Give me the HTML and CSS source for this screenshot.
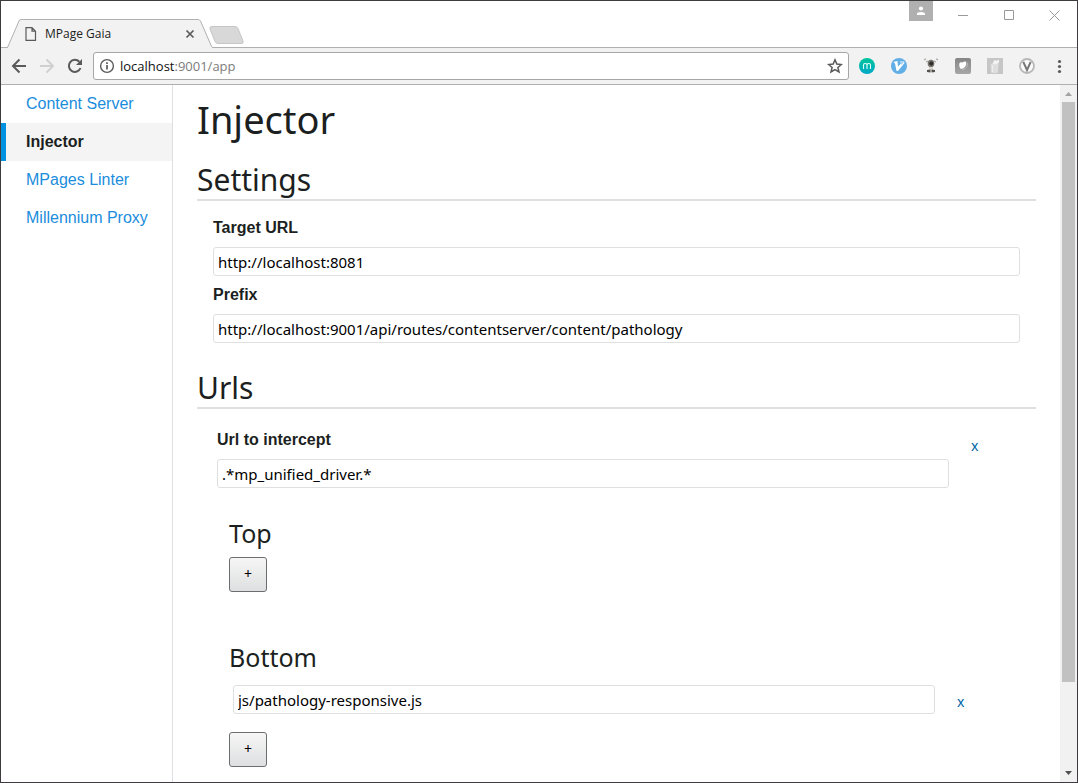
FILE: index.html
```html
<!DOCTYPE html>
<html lang="en">
<head>
<meta charset="utf-8">
<title>MPage Gaia</title>
<link rel="stylesheet" href="styles.css">
</head>
<body>
<div class="window">
  <header class="tabstrip">
    <div class="tab">
      <svg class="tab-shape" width="208" height="29" viewBox="0 0 208 29"><path d="M0 29V28.500H1.500L13 2Q13.500 .500 15 .500H192Q193.500 .500 194.500 2L206 28.500H208V29Z" fill="#f2f2f2" stroke="#b0b0b0"/><path d="M2 28.500H206" stroke="#f2f2f2"/></svg>
      <svg class="tab-page" width="12" height="14" viewBox="0 0 12 14" fill="none" stroke="#5a5a5a" stroke-width="1.200"><path d="M1 .700H7L10.500 4.200V13.300H1ZM7 .700V4.200H10.500"/></svg>
      <span class="tab-title">MPage Gaia</span>
      <button class="icon-button tab-close" aria-label="Close tab"><svg width="10" height="10" viewBox="0 0 10 10"><path d="M1.500 1.500L8.500 8.500M8.500 1.500L1.500 8.500" stroke="#5a5a5a" stroke-width="1.700"/></svg></button>
    </div>
    <button class="icon-button new-tab" aria-label="New tab"><svg width="36" height="18" viewBox="0 0 36 18"><path d="M3 .500H26Q28 .500 29 2.500L34 15Q35 17.500 32 17.500H9Q7 17.500 6 15.500L1 3Q0 .500 3 .500Z" fill="#d8d8d8" stroke="#c6c6c6"/></svg></button>
    <div class="window-controls">
      <button class="icon-button profile" aria-label="Profile"><svg width="10" height="10" viewBox="0 0 10 10" fill="#fff"><circle cx="5" cy="2.500" r="2.100"/><path d="M1 9V7.800Q1 6 5 6Q9 6 9 7.800V9Z"/></svg></button>
      <button class="icon-button control" aria-label="Minimize"><svg width="11" height="11" viewBox="0 0 11 11"><path d="M0 5.500H10" stroke="#999"/></svg></button>
      <button class="icon-button control" aria-label="Maximize"><svg width="11" height="11" viewBox="0 0 11 11"><path d="M.500 .500H9.500V9.500H.500Z" fill="none" stroke="#999"/></svg></button>
      <button class="icon-button control" aria-label="Close"><svg width="11" height="11" viewBox="0 0 11 11"><path d="M.500 .500L10.500 10.500M10.500 .500L.500 10.500" stroke="#999"/></svg></button>
    </div>
  </header>

  <nav class="toolbar" aria-label="Browser">
    <div class="history">
      <button class="icon-button" aria-label="Back"><svg width="16" height="16" viewBox="0 0 16 16" fill="none" stroke="#5a5a5a" stroke-width="2"><path d="M15 8H2.500M8.500 1.500L2 8L8.500 14.500"/></svg></button>
      <button class="icon-button" aria-label="Forward"><svg width="16" height="16" viewBox="0 0 16 16" fill="none" stroke="#d0d0d0" stroke-width="2"><path d="M1 8H13.500M7.500 1.500L14 8L7.500 14.500"/></svg></button>
      <button class="icon-button" aria-label="Reload"><svg width="16" height="16" viewBox="0 0 16 16"><path d="M13.500 10A6 6 0 1 1 12.300 3.800" fill="none" stroke="#5a5a5a" stroke-width="2"/><path d="M15 1V7H9Z" fill="#5a5a5a"/></svg></button>
    </div>
    <div class="address">
      <svg width="16" height="16" viewBox="0 0 16 16"><circle cx="8" cy="8" r="6.400" fill="none" stroke="#5a5a5a" stroke-width="1.400"/><path d="M8 7V11.500M8 4.300V6" stroke="#5a5a5a" stroke-width="1.700"/></svg>
      <div class="url" role="textbox" aria-label="Address" contenteditable="true" spellcheck="false">localhost<span class="url-rest">:9001/app</span></div>
      <button class="icon-button" aria-label="Bookmark"><svg width="16" height="16" viewBox="0 0 16 16"><path d="M8 1.800L9.800 6.100L14.400 6.500L10.900 9.500L12 14L8 11.600L4 14L5.100 9.500L1.600 6.500L6.200 6.100Z" fill="none" stroke="#5a5a5a" stroke-width="1.500"/></svg></button>
    </div>
    <div class="extensions">
      <button class="icon-button" aria-label="Extension m"><svg width="16" height="16" viewBox="0 0 16 16"><defs><linearGradient id="teal" x2="0" y2="1"><stop stop-color="#00c49a"/><stop offset="1" stop-color="#00a9c7"/></linearGradient></defs><circle cx="8" cy="8" r="8" fill="url(#teal)"/><path d="M4.500 11V7Q4.500 5.500 6.200 5.500Q8 5.500 8 7V11M8 7Q8 5.500 9.800 5.500Q11.500 5.500 11.500 7V11" fill="none" stroke="#e6fffa" stroke-width="1.100"/></svg></button>
      <button class="icon-button" aria-label="Extension V"><svg width="16" height="16" viewBox="0 0 16 16"><circle cx="8" cy="8" r="8" fill="#62aee6"/><path d="M2.500 4L6.500 3L7 8.500L10 5.500L9 3.500L13 3.500L13.500 5L7 13H5.500L4 5.500Z" fill="#fff"/><path d="M9.500 3.500L13 4L10.500 7Z" fill="#a9d3f3"/></svg></button>
      <button class="icon-button" aria-label="Postman"><svg width="16" height="16" viewBox="0 0 16 16"><path d="M1 2L3 .800M13 .800L15 2M3 4L5 3M11 3L13 4" stroke="#aaa7a0" stroke-width="1.200"/><ellipse cx="8" cy="5.500" rx="3.300" ry="3.800" fill="#77736b"/><circle cx="8.300" cy="5.600" r="2" fill="#2f2d2a"/><path d="M6 9H10V12H6Z" fill="#d9d6ce"/><path d="M4 12L7.500 11.500V14.500L4 14ZM8.700 11.500L12 12V14L8.700 14.500Z" fill="#55524d"/><path d="M7.300 12H9V14H7.300Z" fill="#999"/></svg></button>
      <button class="icon-button" aria-label="Extension leaf"><svg width="16" height="16" viewBox="0 0 16 16"><defs><linearGradient id="grey" x2="0" y2="1"><stop stop-color="#858585"/><stop offset="1" stop-color="#a6a6a6"/></linearGradient></defs><rect width="16" height="16" rx="2" fill="url(#grey)"/><path d="M4.300 5.500Q5.500 3.500 7.500 4.500Q9.500 3 11.200 3.800Q12 7 9.500 9.500Q7.500 11.500 5.200 10.500Q3.800 8 4.300 5.500Z" fill="#fff"/><path d="M12 4.500Q13.500 6.500 11.500 9.500Q9.500 12 7 12" fill="none" stroke="#b8b8b8"/></svg></button>
      <button class="icon-button" aria-label="Extension bin"><svg width="16" height="16" viewBox="0 0 16 16"><path d="M0 0H16V16H0Z" fill="#c6c6c6"/><path d="M3.500 6Q8 4.500 11.500 6L11 14.500Q7 16 4 14.500Z" fill="#dedede"/><path d="M5.500 5.500L7.500 2L10 2.800L12 1.500V5L8 6.500Z" fill="#f3f3f3"/><path d="M5.500 7V14" stroke="#eee"/></svg></button>
      <button class="icon-button" aria-label="Extension V grey"><svg width="16" height="16" viewBox="0 0 16 16"><circle cx="8" cy="8" r="7" fill="#fafafa" stroke="#b8b8b8" stroke-width="1.800"/><path d="M4.300 3.800L8 12L11.700 3.800" fill="none" stroke="#777" stroke-width="2"/></svg></button>
      <button class="icon-button" aria-label="Menu"><svg width="16" height="16" viewBox="0 0 16 16" fill="#5a5a5a"><circle cx="8.500" cy="3.500" r="1.600"/><circle cx="8.500" cy="8.500" r="1.600"/><circle cx="8.500" cy="13.500" r="1.600"/></svg></button>
    </div>
  </nav>

  <div class="page">
    <nav class="sidebar" aria-label="Sections">
      <a class="nav-link" href="#content">Content Server</a>
      <a class="nav-link active" href="#injector" aria-current="page">Injector</a>
      <a class="nav-link" href="#linter">MPages Linter</a>
      <a class="nav-link" href="#proxy">Millennium Proxy</a>
    </nav>
    <main class="content">
      <h1>Injector</h1>
      <section class="settings">
        <h2>Settings</h2>
        <div class="fields">
          <label for="target">Target URL</label>
          <input class="text" id="target" type="text" value="http://localhost:8081">
          <label for="prefix">Prefix</label>
          <input class="text" id="prefix" type="text" value="http://localhost:9001/api/routes/contentserver/content/pathology">
        </div>
      </section>
      <section>
        <h2>Urls</h2>
        <div class="rule">
          <div class="rule-field">
            <label for="intercept">Url to intercept</label>
            <input class="text" id="intercept" type="text" value=".*mp_unified_driver.*">
          </div>
          <button class="remove" aria-label="Remove url">x</button>
        </div>
        <div class="group">
          <h3>Top</h3>
          <button class="add" aria-label="Add top script">+</button>
        </div>
        <div class="group">
          <h3>Bottom</h3>
          <div class="script">
            <input class="text" type="text" aria-label="Bottom script" value="js/pathology-responsive.js">
            <button class="remove" aria-label="Remove script">x</button>
          </div>
          <button class="add" aria-label="Add bottom script">+</button>
        </div>
      </section>
    </main>
    <div class="scrollbar" aria-hidden="true">
      <svg width="17" height="17" viewBox="0 0 17 17"><path d="M5 11L8.500 7L12 11Z" fill="#a3a3a3"/></svg>
      <div class="track"><div class="thumb"></div></div>
      <svg width="17" height="17" viewBox="0 0 17 17"><path d="M5 6L8.500 10L12 6Z" fill="#505050"/></svg>
    </div>
  </div>
</div>
</body>
</html>
```

FILE: styles.css
```css
* { box-sizing: border-box; }

body {
  margin: 0;
  font-family: "Noto Sans", sans-serif;
  color: #1c1f21;
}

.window {
  display: flex;
  flex-direction: column;
  height: 100vh;
  border: 1px solid #3f3c40;
  background: #fff;
  overflow: hidden;
}

.icon-button {
  display: flex;
  align-items: center;
  justify-content: center;
  padding: 0;
  border: 0;
  background: none;
}

.icon-button svg,
.tab svg,
.address svg,
.scrollbar svg { display: block; flex: none; }

.tabstrip {
  display: flex;
  align-items: flex-end;
  height: 47px;
  flex: none;
  border-bottom: 1px solid #b0b0b0;
}

.tab {
  position: relative;
  display: flex;
  align-items: center;
  width: 208px;
  height: 29px;
  margin: 0 0 -1px 5px;
  padding: 0 19px;
}

.tab-shape { position: absolute; inset: 0; }
.tab-page { position: relative; }

.tab-title {
  position: relative;
  flex: 1;
  padding-left: 8px;
  font-family: "Open Sans", sans-serif;
  font-size: 12px;
  color: #222;
}

.tab-close { position: relative; }
.new-tab { margin: 0 0 3px -5px; }

.window-controls {
  display: flex;
  align-self: flex-start;
  margin-left: auto;
}

.profile { width: 24px; height: 20px; margin-right: 7px; background: #b0b0b0; }
.control { width: 46px; height: 28px; }
.control:last-child { width: 45px; }

.toolbar {
  display: flex;
  align-items: center;
  height: 37px;
  flex: none;
  padding: 0 10px;
  border-bottom: 1px solid #b0b0b0;
  background: #f2f2f2;
}

.history { display: flex; gap: 12px; margin-right: 10px; }

.address {
  display: flex;
  flex: 1;
  align-items: center;
  height: 28px;
  padding: 0 5px;
  border: 1px solid #a6a6a6;
  border-radius: 3px;
  background: #fff;
}

.url {
  flex: 1;
  padding-left: 5px;
  font-family: "Open Sans", sans-serif;
  font-size: 13px;
  color: #111;
}

.url-rest { color: #7c7c7c; }

.extensions { display: flex; gap: 16px; margin-left: 10px; }

.page { display: flex; flex: 1; min-height: 0; }

.sidebar {
  width: 172px;
  flex: none;
  border-right: 1px solid #dedfe0;
}

.nav-link {
  display: block;
  padding-left: 20px;
  border-left: 5px solid transparent;
  font: 16px/38px "Liberation Sans", Arial, sans-serif;
  color: #1b8ddc;
  text-decoration: none;
}

.nav-link.active {
  border-color: #0092e0;
  background: #f4f4f4;
  color: #1c1f21;
  font-weight: bold;
}

.content {
  flex: 1;
  min-width: 0;
  padding: 10px 24px 0;
  overflow: hidden;
}

h1, h2, h3 { margin: 0; font-weight: normal; }
h1 { font-size: 38px; line-height: 48px; }
h2 { margin-top: 18px; border-bottom: 2px solid #dedfe0; font-size: 30px; line-height: 38px; }
h3 { margin-bottom: 4px; font-size: 25px; line-height: 40px; }

.fields, .rule-field { display: flex; flex-direction: column; }
.fields { padding: 8px 16px 0; }

label {
  font: bold 16px/38px "Liberation Sans", Arial, sans-serif;
}

.text {
  width: 100%;
  min-width: 0;
  height: 29px;
  padding: 0 4px;
  border: 1px solid #dedfe0;
  border-radius: 3px;
  background: #fff;
  font: 15px "Noto Sans", sans-serif;
  color: #000;
}

.settings { margin-bottom: 26px; }
.rule { display: flex; padding: 12px 0 0 20px; }
.rule-field { flex: 1; }

.remove {
  width: 87px;
  height: 24px;
  flex: none;
  margin-top: 12px;
  padding: 0 0 0 22px;
  border: 0;
  background: none;
  font: 14px "Noto Sans", sans-serif;
  color: #0065a8;
  text-align: left;
}

.group { padding: 25px 14px 0 32px; }
.group + .group { padding-top: 45px; }

.script { display: flex; margin-bottom: 18px; padding: 4px 0 0 4px; }
.script .remove { margin-top: 4px; }

.add {
  display: block;
  width: 38px;
  height: 35px;
  padding: 0 0 2px;
  border: 1px solid #6b6e70;
  border-radius: 3px;
  background: linear-gradient(#f6f6f6, #dedfe0);
  font: 14px "Noto Sans", sans-serif;
  color: #000;
}

.scrollbar {
  display: flex;
  flex-direction: column;
  width: 17px;
  flex: none;
  background: #f1f1f1;
}

.track { flex: 1; padding: 0 2px; }
.thumb { height: 87.500%; background: #c1c1c1; }
```
